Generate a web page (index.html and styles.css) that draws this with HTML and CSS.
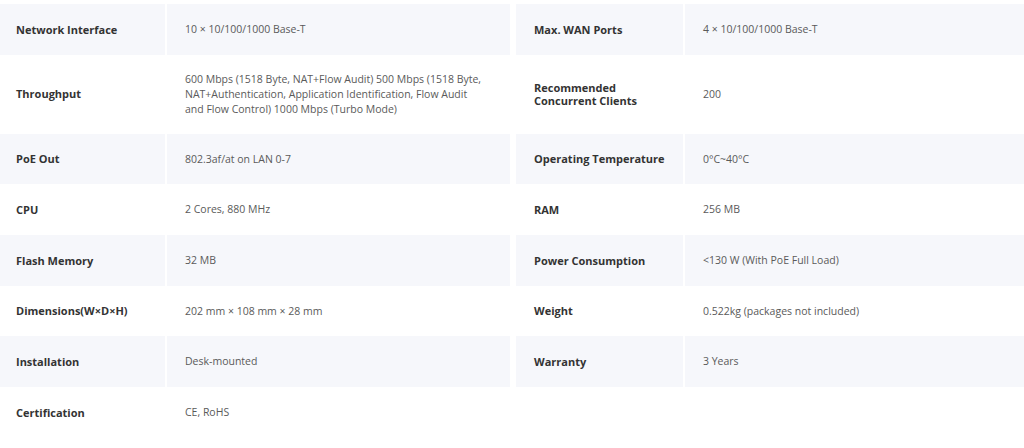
FILE: index.html
```html
<!DOCTYPE html>
<html lang="en">
<head>
<meta charset="utf-8">
<title>Specifications</title>
<link rel="stylesheet" href="styles.css">
</head>
<body>
<div class="specs">
  <div class="row shaded">
    <div class="pair"><div class="label">Network Interface</div><div class="value">10 × 10/100/1000 Base-T</div></div>
    <div class="pair"><div class="label">Max. WAN Ports</div><div class="value">4 × 10/100/1000 Base-T</div></div>
  </div>
  <div class="row">
    <div class="pair"><div class="label">Throughput</div><div class="value">600 Mbps (1518 Byte, NAT+Flow Audit) 500 Mbps (1518 Byte, NAT+Authentication, Application Identification, Flow Audit and Flow Control) 1000 Mbps (Turbo Mode)</div></div>
    <div class="pair"><div class="label">Recommended Concurrent Clients</div><div class="value">200</div></div>
  </div>
  <div class="row shaded">
    <div class="pair"><div class="label">PoE Out</div><div class="value">802.3af/at on LAN 0-7</div></div>
    <div class="pair"><div class="label">Operating Temperature</div><div class="value">0°C~40°C</div></div>
  </div>
  <div class="row">
    <div class="pair"><div class="label">CPU</div><div class="value">2 Cores, 880 MHz</div></div>
    <div class="pair"><div class="label">RAM</div><div class="value">256 MB</div></div>
  </div>
  <div class="row shaded">
    <div class="pair"><div class="label">Flash Memory</div><div class="value">32 MB</div></div>
    <div class="pair"><div class="label">Power Consumption</div><div class="value">&lt;130 W (With PoE Full Load)</div></div>
  </div>
  <div class="row">
    <div class="pair"><div class="label">Dimensions(W×D×H)</div><div class="value">202 mm × 108 mm × 28 mm</div></div>
    <div class="pair"><div class="label">Weight</div><div class="value">0.522kg (packages not included)</div></div>
  </div>
  <div class="row shaded">
    <div class="pair"><div class="label">Installation</div><div class="value">Desk-mounted</div></div>
    <div class="pair"><div class="label">Warranty</div><div class="value">3 Years</div></div>
  </div>
  <div class="row">
    <div class="pair"><div class="label">Certification</div><div class="value">CE, RoHS</div></div>
    <div class="pair empty"></div>
  </div>
</div>
</body>
</html>
```
FILE: styles.css
```css
html, body {
  margin: 0;
  padding: 0;
  background: #ffffff;
}
body {
  padding-top: 4px;
  font-family: "Open Sans", "Noto Sans", sans-serif;
  font-size: 10px;
  overflow: hidden;
}
.specs {
  width: 1030px;
  margin-left: -2px;
}
.row {
  display: grid;
  grid-template-columns: 512px 512px;
  column-gap: 6px;
  min-height: 50.7px;
}
.pair {
  display: grid;
  grid-template-columns: 167px 1fr;
  column-gap: 2px;
}
.label, .value {
  display: flex;
  align-items: center;
  padding: 17px 18px;
}
.label {
  color: #333333;
  font-size: 11px;
  font-weight: 700;
  line-height: 13.5px;
}
.value {
  color: #5a5a5a;
  font-size: 10.5px;
  line-height: 15px;
  padding-right: 26px;
}
.shaded .label, .shaded .value {
  background: #f6f7fb;
}
```
